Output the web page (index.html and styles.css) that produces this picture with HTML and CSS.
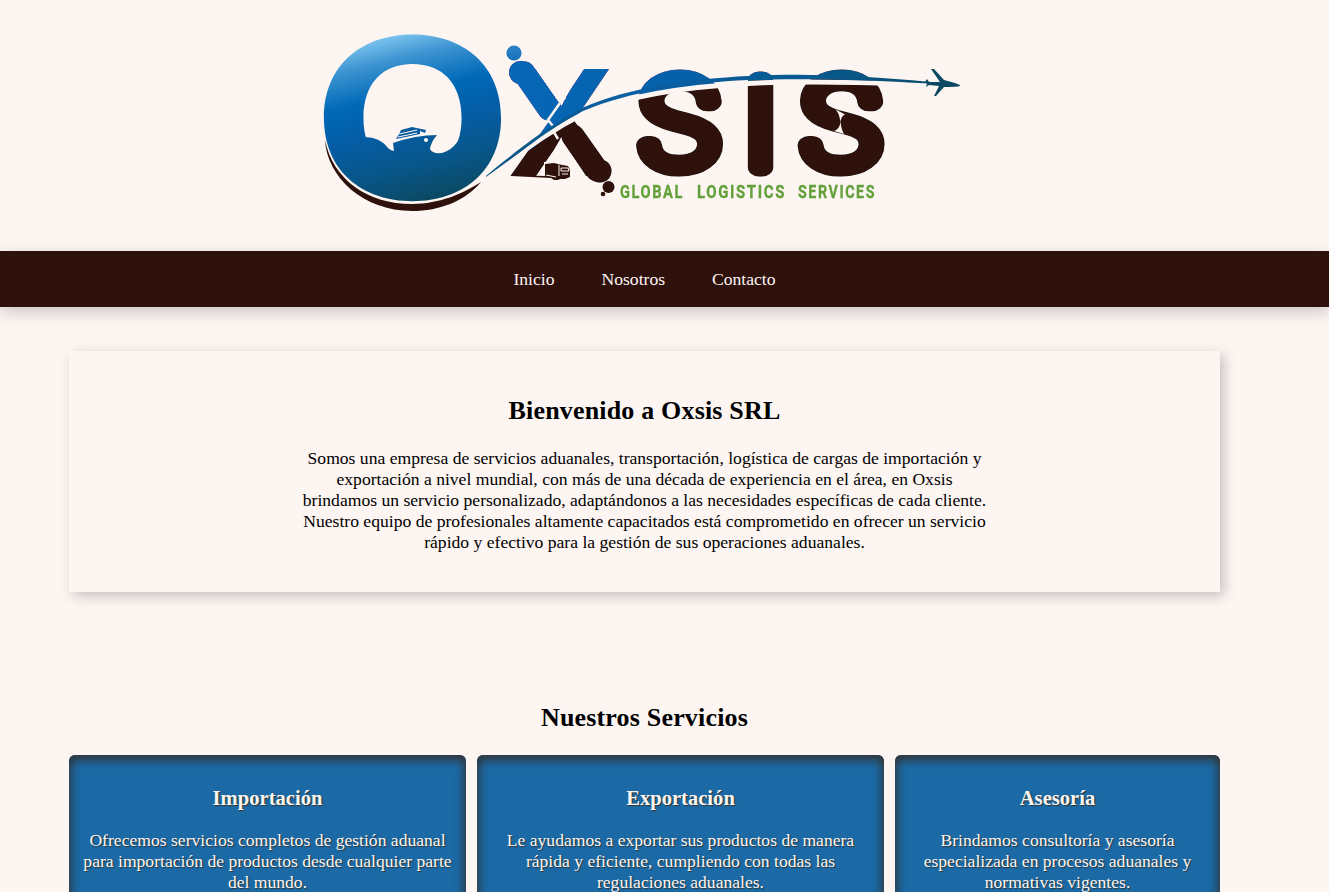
FILE: index.html
```html
<!DOCTYPE html>
<html lang="es">
<head>
<meta charset="utf-8">
<title>Oxsis SRL</title>
<link rel="stylesheet" href="styles.css">
</head>
<body>
<header class="header">
<svg class="logo" viewBox="320 20 650 200" role="img" aria-label="Oxsis Global Logistics Services">
  <defs>
    <linearGradient id="ring" gradientUnits="userSpaceOnUse" x1="385" y1="34" x2="425" y2="202">
      <stop offset="0" stop-color="#84caf3"/><stop offset=".16" stop-color="#3c93d0"/><stop offset=".36" stop-color="#0069b8"/><stop offset=".55" stop-color="#045da6"/><stop offset=".78" stop-color="#08568a"/><stop offset="1" stop-color="#0b4962"/>
    </linearGradient>
    <linearGradient id="ring-local" href="#ring" gradientTransform="scale(.3831 .4484) translate(-412.5 -199)"/>
    <linearGradient id="sky" gradientUnits="userSpaceOnUse" x1="500" y1="45" x2="508" y2="145">
      <stop offset="0" stop-color="#2f86c8"/><stop offset=".28" stop-color="#0765b2"/><stop offset="1" stop-color="#065a98"/>
    </linearGradient>
    <linearGradient id="tops" gradientUnits="userSpaceOnUse" x1="500" y1="0" x2="890" y2="0">
      <stop offset="0" stop-color="#0768b8"/><stop offset=".5" stop-color="#0560a8"/><stop offset="1" stop-color="#07547d"/>
    </linearGradient>
    <linearGradient id="trail" gradientUnits="userSpaceOnUse" x1="486" y1="0" x2="960" y2="0">
      <stop offset="0" stop-color="#0c5580"/><stop offset=".3" stop-color="#0b5fa3"/><stop offset=".7" stop-color="#08598f"/><stop offset="1" stop-color="#0b4962"/>
    </linearGradient>
  </defs>
  <rect class="bg" x="320" y="20" width="650" height="200"/>
  <path class="brown" d="M325 140C333 180 368 204 412 204C440 204 464 193 481 182C465 201 440 211 412 211C363 211 327 177 325 140Z"/>
  <text class="mark ring" fill="url(#ring-local)" transform="translate(412.5 199) scale(2.61 2.23)">O</text>
  <path fill="url(#ring)" d="M350 139C368 134 382 139 388 148Q391 151 394 151L393 143Q416 135 437 135Q431 142 430 149Q432 154 442 153C455 149 461 139 464 125L476 155L440 188H388L352 160Z"/>
  <path fill="#075c9e" d="M396 139L399 134L401 130L412 127L426 130L425 133L420 131V134Z"/>
  <path class="line" d="M399 134L417 130M398 137L417 133"/>
  <circle class="bg" cx="426" cy="140" r="2"/>

  <text class="mark heavy" transform="translate(561.5 175.500) scale(1.48 1.465)">X</text>
  <path class="bg" d="M531 63L548 60L566 99L559 103Z"/>
  <path class="bg" d="M592 140L616 150L618 180L607 179L607 165ZM580 165L590 179H600V165Z"/>
  <path class="bar" d="M520.500 72.500L524 73L549 109M573 136L597 170L600 171"/>
  <text class="mark thin" transform="translate(679.5 165.500) scale(1.4 1.18)">S</text>
  <text class="mark thin" transform="translate(760.5 166.500) scale(1.37 1.18)">I</text>
  <text class="mark thin" transform="translate(841 165.500) scale(1.4 1.18)">S</text>
  <path class="tint" fill="url(#tops)" d="M505 56H960V84C800 72 690 80 610 104C560 122 525 155 505 169Z"/>
  <path class="tint brown" d="M505 169C525 155 560 122 610 104C690 80 800 72 960 84V200H505Z"/>
  <path class="gap" d="M482 181C520 154 545 133 583 114C630 94.500 690 86.500 748 83.500C810 80.500 865 82.500 905 84"/>
  <path class="joint" d="M560 103L548 120L553 126M552 129L558 139"/>
  <path class="bg" d="M835 109L845 114.500Q841 116 840.500 122Q839 112 835 109ZM834 131Q840 129 840.500 121Q841 129 844 134Z"/>
  <path fill="url(#trail)" d="M486 176C520 148 545 128 582 108C630 87 690 79 748 76C810 73 865 76 930 82V83.500C865 80 810 78 748 80C690 83 630 91 583 111C545 131 522 152 486 177Z"/>
  <circle fill="url(#sky)" cx="514" cy="53" r="7.600"/>
  <circle class="brown" cx="608.500" cy="187" r="6"/>
  <circle class="brown" cx="603" cy="194" r="2.300"/>
  <path fill="#0b4962" d="M927 79L929 82L940 82L931 69L934 69L944 80L955 83Q961 85 960 86Q957 87 944 87L936 96H934L939 86L929 85L926 87L927 84L925 82Z"/>
  <path class="bg" d="M544 162L556 161L571 165L571 180L544 180Z"/>
  <path class="brown" d="M511 175L545 176V164L554 163L560 164.500L568 166L570 170V177L565 179H560L558 180H554L551 178L511 176Z"/>
  <path class="line" d="M561 168H568L569 171H561ZM559 165V176M546 175L556 177M562 174H568"/>
  <g class="tagline">
    <text x="620" y="197.500" textLength="64" lengthAdjust="spacingAndGlyphs">GLOBAL</text>
    <text x="697" y="197.500" textLength="89" lengthAdjust="spacingAndGlyphs">LOGISTICS</text>
    <text x="798" y="197.500" textLength="78" lengthAdjust="spacingAndGlyphs">SERVICES</text>
  </g>
</svg>
</header>
<nav class="nav"><a>Inicio</a><a>Nosotros</a><a>Contacto</a></nav>
<main class="main">
  <section class="welcome">
    <h2>Bienvenido a Oxsis SRL</h2>
    <p>Somos una empresa de servicios aduanales, transportación, logística de cargas de importación y exportación a nivel mundial, con más de una década de experiencia en el área, en Oxsis brindamos un servicio personalizado, adaptándonos a las necesidades específicas de cada cliente. Nuestro equipo de profesionales altamente capacitados está comprometido en ofrecer un servicio rápido y efectivo para la gestión de sus operaciones aduanales.</p>
  </section>
  <section class="services">
    <h2>Nuestros Servicios</h2>
    <div class="cards">
      <article class="card"><h3>Importación</h3><p>Ofrecemos servicios completos de gestión aduanal para importación de productos desde cualquier parte del mundo.</p></article>
      <article class="card"><h3>Exportación</h3><p>Le ayudamos a exportar sus productos de manera rápida y eficiente, cumpliendo con todas las regulaciones aduanales.</p></article>
      <article class="card"><h3>Asesoría</h3><p>Brindamos consultoría y asesoría especializada en procesos aduanales y normativas vigentes.</p></article>
    </div>
  </section>
</main>
</body>
</html>
```
FILE: styles.css
```css
* { box-sizing: border-box; }
html { overflow: hidden; }
body {
  margin: 0;
  height: 892px;
  overflow: hidden;
  background: #fdf5f2;
  color: #000;
  font: 17.6px/21px "Liberation Serif", "Times New Roman", serif;
}
.header { height: 251px; padding: 20px 0 0 320px; }
.logo { display: block; width: 650px; height: 200px; isolation: isolate; overflow: visible; }
.mark { font-family: Inter, sans-serif; font-size: 100px; text-anchor: middle; }
.ring, .heavy { font-weight: 700; }
.thin { font-weight: 100; stroke: #000; stroke-width: 16.3px; stroke-linejoin: round; }
.brown { fill: #2f110c; }
.bar { fill: none; stroke: #000; stroke-width: 23px; stroke-linecap: round; stroke-linejoin: round; }
.tint { mix-blend-mode: lighten; }
.bg { fill: #fdf5f2; }
.line, .gap, .joint { fill: none; stroke: #fdf5f2; stroke-width: 1px; }
.gap { stroke-width: 5px; }
.joint { stroke-width: 2.5px; }
.tagline { font: 700 18.5px Roboto, sans-serif; letter-spacing: 2px; fill: #63a03a; stroke: #63a03a; stroke-width: .3px; }
.nav {
  display: flex;
  justify-content: center;
  gap: 47px;
  height: 56px;
  padding: 18px 40px 0 0;
  background: #2f110c;
  color: #fdf5f2;
  box-shadow: 0 5px 15px rgba(0, 0, 0, .2);
}
.main { width: 1151px; margin: 44px 0 0 69px; text-align: center; }
h2 { margin: 0; font-size: 26px; line-height: 30px; letter-spacing: .18px; }
.welcome {
  height: 241px;
  padding-top: 45px;
  box-shadow: 4px 4px 12px rgba(0, 0, 0, .22);
}
.welcome p { width: 690px; margin: 22px auto 0; }
.services { padding-top: 111px; }
.cards { display: grid; grid-template-columns: 397px 407px 325px; gap: 11px; margin-top: 22px; }
.card {
  height: 170px;
  padding: 31px 12px 0;
  border-radius: 6px;
  background: #1b6aa5;
  color: #fdf5f2;
  text-shadow: 1px 1px 1px #333;
  box-shadow: inset 0 3px 10px 2px #333;
}
.card h3 { margin: 0; font-size: 20.6px; line-height: 24px; }
.card p { margin: 20px 0 0; }
```
